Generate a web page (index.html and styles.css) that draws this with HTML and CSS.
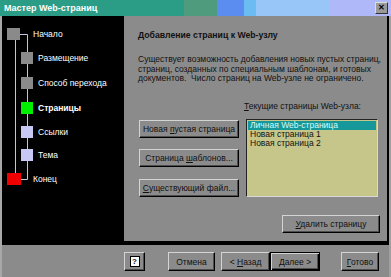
FILE: index.html
```html
<!DOCTYPE html>
<html lang="ru">
<head>
  <meta charset="UTF-8">
  <title>Мастер Web-страниц</title>
  <link rel="stylesheet" href="styles.css">
</head>
<body>
  <div class="window">
    <div class="titlebar">
      <span class="title">Мастер Web-страниц</span>
      <span class="close">✕</span>
    </div>

    <div class="main">
      <div class="steps">
        <svg class="tree" width="122" height="229" viewBox="2 16 122 229">
          <path class="link" d="M15.5 40 V173 M20 34.5 H27.5 V179.5 H20"/>
          <rect class="sq gray" x="7" y="28" width="13" height="12"/>
          <rect class="sq gray" x="21" y="52" width="12" height="12"/>
          <rect class="sq gray" x="21" y="77" width="12" height="12"/>
          <rect class="sq green" x="21" y="102" width="12" height="12"/>
          <rect class="sq lilac" x="21" y="126" width="12" height="12"/>
          <rect class="sq lilac" x="21" y="149" width="12" height="12"/>
          <rect class="sq red" x="7" y="173" width="14" height="12"/>
          <text class="label" x="33" y="37">Начало</text>
          <text class="label" x="38" y="61">Размещение</text>
          <text class="label" x="38" y="86">Способ перехода</text>
          <text class="label current" x="38" y="111">Страницы</text>
          <text class="label" x="38" y="135">Ссылки</text>
          <text class="label" x="38" y="158">Тема</text>
          <text class="label" x="33" y="182">Конец</text>
        </svg>
      </div>

      <div class="page">
        <h1>Добавление страниц к Web-узлу</h1>
        <p class="intro">
          Существует возможность добавления новых пустых страниц,<br>
          страниц, созданных по специальным шаблонам, и готовых<br>
          документов.&nbsp; Число страниц на Web-узле не ограничено.
        </p>

        <div class="pages">
          <div class="actions">
            <button class="btn">Новая <u>п</u>устая страница</button>
            <button class="btn">Страница <u>ш</u>аблонов...</button>
            <button class="btn"><u>С</u>уществующий файл...</button>
          </div>
          <div class="current-pages">
            <div class="caption"><u>Т</u>екущие страницы Web-узла:</div>
            <ul class="listbox">
              <li class="selected">Личная Web-страница</li>
              <li>Новая страница 1</li>
              <li>Новая страница 2</li>
            </ul>
          </div>
        </div>

        <div class="remove-row">
          <button class="btn remove"><u>У</u>далить страницу</button>
        </div>
      </div>
    </div>

    <div class="footer">
      <button class="btn help"><span class="help-icon">?</span></button>
      <button class="btn cancel">Отмена</button>
      <button class="btn back">&lt; <u>Н</u>азад</button>
      <button class="btn next default"><u>Д</u>алее &gt;</button>
      <button class="btn done"><u>Г</u>отово</button>
    </div>
  </div>
</body>
</html>
```

FILE: styles.css
```css
body {
  margin: 0;
  background: #8b8b8b;
  font-family: "Liberation Sans", Arial, sans-serif;
  font-size: 8.5px;
  color: #111;
}
.window {
  width: 391px;
  height: 277px;
  background: #8b8b8b;
  box-shadow: inset 2px 0 #a8a8a8, inset -2px 0 #a0a0a0;
  overflow: hidden;
}
.titlebar {
  height: 16px;
  display: flex;
  align-items: center;
  justify-content: space-between;
  padding: 0 3px 0 4px;
  background: linear-gradient(to right,
    #2b9c86 0, #2b9c86 47%,
    #4e9b7d 47%, #4e9b7d 55.5%,
    #5b8cf0 55.5%, #5b8cf0 62.5%,
    #6cbcf4 62.5%, #6cbcf4 65.5%,
    #98c6f8 65.5%, #98c6f8 84.5%,
    #afb8f8 84.5%);
}
.title {
  color: #fff;
  font-weight: bold;
  font-size: 9px;
}
.close {
  width: 11px;
  height: 10px;
  line-height: 10px;
  text-align: center;
  font-size: 8px;
  font-weight: bold;
  color: #000;
  background: #9a9a9a;
  border: 1px solid;
  border-color: #ddd #333 #333 #ddd;
}

.main {
  display: flex;
  height: 229px;
  margin: 0 2px;
  background: #000;
  padding: 0 2px 4px 0;
  box-sizing: border-box;
}
.steps {
  width: 122px;
  flex-shrink: 0;
}
.tree {
  display: block;
}
.link {
  fill: none;
  stroke: #c4c4dc;
  stroke-width: 1;
}
.sq.gray { fill: #8a8a8a; }
.sq.green { fill: #00f000; }
.sq.lilac { fill: #c8c8f4; }
.sq.red { fill: #f00000; }
.label {
  fill: #fff;
  font-family: "Liberation Sans", Arial, sans-serif;
  font-size: 8.5px;
}
.label.current {
  font-weight: bold;
}

.page {
  flex: 1;
  min-width: 0;
  overflow: hidden;
  background: #8b8b8b;
  padding: 14px 0 0 14px;
}
h1 {
  margin: 0;
  font-size: 8.7px;
  line-height: 10px;
  font-weight: bold;
}
.intro {
  margin: 15px 0 0;
  line-height: 9.5px;
  white-space: nowrap;
}
.pages {
  display: flex;
  margin-top: 17px;
}
.actions {
  display: flex;
  flex-direction: column;
  width: 100px;
  margin: 19px 0 0 1px;
}
.actions .btn {
  height: 18px;
}
.actions .btn + .btn {
  margin-top: 11px;
}
.actions .btn:last-child {
  margin-top: 12px;
}
.current-pages {
  margin-left: 5px;
}
.caption {
  line-height: 10px;
}
.listbox {
  list-style: none;
  margin: 8px 0 0 2px;
  padding: 1px;
  width: 132px;
  height: 78px;
  box-sizing: border-box;
  background: #c6c68a;
  border: 1px solid;
  border-color: #222 #d8d8d8 #d8d8d8 #222;
}
.listbox li {
  height: 9px;
  line-height: 9px;
  padding-left: 2px;
}
.listbox li.selected {
  background: #16989a;
  color: #d4fbfb;
}
.remove-row {
  display: flex;
  justify-content: flex-end;
  padding-right: 7px;
  margin-top: 18px;
}
.remove {
  width: 98px;
  height: 18px;
}

.btn {
  font-family: "Liberation Sans", Arial, sans-serif;
  font-size: 8.5px;
  color: #111;
  background: #8b8b8b;
  padding: 0;
  border: 1px solid;
  border-color: #d4d4d4 #000 #000 #d4d4d4;
  box-shadow: inset -1px -1px #4e4e4e;
  box-sizing: border-box;
}
.btn u {
  text-underline-offset: 1px;
}

.footer {
  display: flex;
  padding: 7px 0 0 124px;
}
.footer .btn {
  height: 19px;
}
.help {
  width: 21px;
  display: flex;
  align-items: center;
  justify-content: center;
}
.help-icon {
  width: 8px;
  height: 9px;
  line-height: 9px;
  background: #fff;
  border: 1px solid #000;
  font-size: 8px;
  font-weight: bold;
  text-align: center;
}
.cancel {
  width: 47px;
  margin-left: 23px;
}
.back {
  width: 49px;
  margin-left: 6px;
}
.next {
  width: 50px;
}
.default {
  border-color: #000;
  box-shadow: inset 1px 1px #d4d4d4, inset -1px -1px #000, inset -2px -2px #4e4e4e;
}
.done {
  width: 38px;
  margin-left: 21px;
}
```
